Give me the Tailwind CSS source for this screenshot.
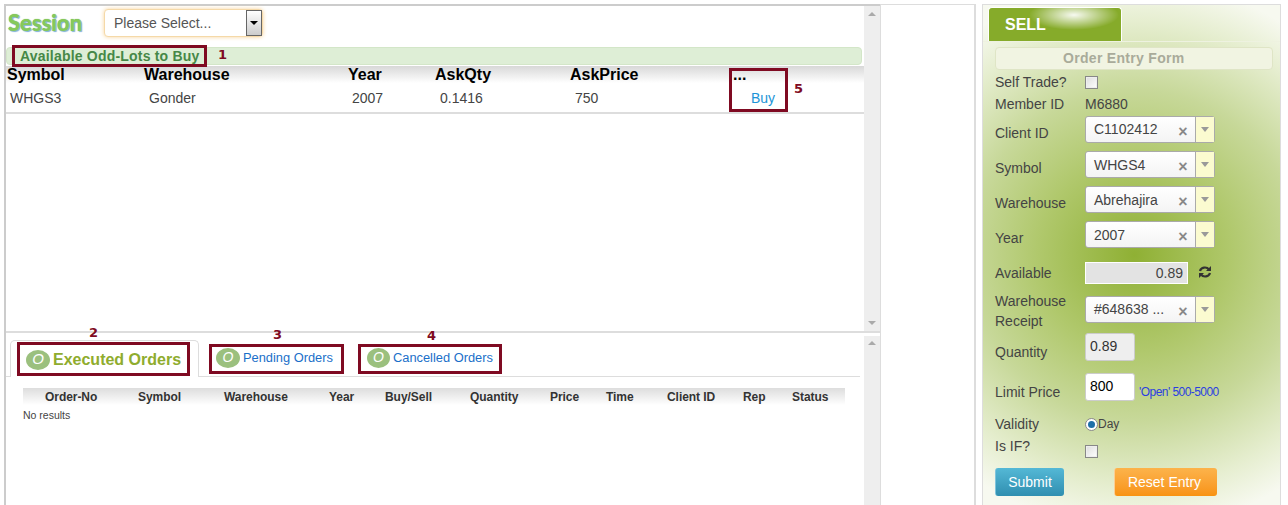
<!DOCTYPE html>
<html lang="en">
<head>
    <meta charset="UTF-8">
    <title>Odd-Lots Order Entry</title>
    <script src="https://cdn.jsdelivr.net/npm/@tailwindcss/browser@4"></script>
</head>
<body class="bg-white font-['Liberation_Sans',Arial,sans-serif] text-[14px] text-[#444]">
<div class="relative flex w-[1288px] h-[505px] overflow-hidden">

    <!-- Left: market + orders -->
    <div class="ml-[4px] w-[876px] h-[505px] flex flex-col border-l-2 border-t-2 border-[#ccc] mt-[4px] shrink-0">
        <!-- Market pane -->
        <div class="flex h-[325px] shrink-0">
            <div class="w-[858px] shrink-0">
                <div class="flex items-start h-[41px] pt-[3px]">
                    <span class="ml-[2px] w-[96px] mt-[3px] font-['Lato',sans-serif] font-black text-[22px] leading-none text-[#86c95a] [text-shadow:1px_1px_1px_#7fb0d8,0_0_1px_#6fb548]">Session</span>
                    <div class="flex w-[159px] h-[28px] rounded-[4px] border border-[#f5d9a8] shadow-[0_0_4px_#f8d49a] bg-white">
                        <span class="flex-1 pl-[9px] leading-[26px] text-[#555]">Please Select...</span>
                        <span class="flex items-center justify-center w-[16px] border border-[#666] bg-gradient-to-b from-white to-[#ccc]">
                            <span class="w-0 h-0 border-x-[4px] border-x-transparent border-t-[4px] border-t-black"></span>
                        </span>
                    </div>
                </div>
                <div class="mr-[2px] h-[18px] rounded-[4px] border border-[#d3e6c8] bg-[#deeed6] pl-[13px] font-bold text-[14px] leading-[17px] tracking-[0.2px] text-[#468847]">Available Odd-Lots to Buy</div>
                <div class="grid grid-cols-[137px_204px_87px_135px_163px_1fr] h-[17px] mt-[1px] pl-[1px] bg-gradient-to-b from-[#d8d8d8] to-white font-bold text-[16px] leading-[17px] text-black">
                    <span>Symbol</span><span>Warehouse</span><span>Year</span><span>AskQty</span><span>AskPrice</span><span>...</span>
                </div>
                <div class="grid grid-cols-[138px_204px_87px_135px_163px_1fr] h-[31px] pl-[4px] border-b-2 border-[#ddd] leading-[30px] text-[#444]">
                    <span>WHGS3</span><span class="pl-[1px]">Gonder</span><span>2007</span><span class="pl-[1px]">0.1416</span><span class="pl-[1px]">750</span><span class="pl-[14px] text-[#1c94d8]">Buy</span>
                </div>
            </div>
            <div class="flex flex-col justify-between items-center w-[16px] bg-[#eee] py-[6px]">
                <span class="w-0 h-0 border-x-[4px] border-x-transparent border-b-[4px] border-b-[#aaa]"></span>
                <span class="w-0 h-0 border-x-[4px] border-x-transparent border-t-[4px] border-t-[#aaa]"></span>
            </div>
        </div>

        <!-- Orders pane -->
        <div class="flex flex-1 border-t-2 border-[#ddd]">
            <div class="w-[858px] shrink-0 pt-[7px]">
                <div class="flex items-end h-[37px] mr-[4px] pl-[4px] border-b border-[#ddd]">
                    <div class="flex items-center w-[189px] h-[37px] -mb-px pl-[15px] pt-[1px] bg-white border border-b-0 border-[#ddd] rounded-t-[5px]">
                        <span class="flex items-center justify-center w-[24px] h-[20px] rounded-[50%] bg-[#9bc07e] italic text-white text-[15px]">O</span>
                        <span class="ml-[3px] font-bold text-[16px] text-[#8fac2e]">Executed Orders</span>
                    </div>
                    <div class="flex items-center h-[36px] ml-[17px] pb-[1px] text-[12.85px] text-[#1a6fc9]">
                        <span class="flex items-center justify-center w-[24px] h-[20px] rounded-[50%] bg-[#9bc07e] italic text-white text-[14px]">O</span>
                        <span class="ml-[3px]">Pending Orders</span>
                    </div>
                    <div class="flex items-center h-[36px] ml-[34px] pb-[1px] text-[12.85px] text-[#1a6fc9]">
                        <span class="flex items-center justify-center w-[23px] h-[20px] rounded-[50%] bg-[#9bc07e] italic text-white text-[14px]">O</span>
                        <span class="ml-[3px]">Cancelled Orders</span>
                    </div>
                </div>
                <div class="grid grid-cols-[22px_93px_86px_105px_56px_85px_80px_56px_61px_76px_49px_1fr] h-[17px] ml-[17px] mr-[19px] mt-[11px] bg-gradient-to-b from-[#ddd] to-white font-bold text-[12px] leading-[19px] tracking-[-0.05px] text-[#333]">
                    <span></span><span>Order-No</span><span>Symbol</span><span>Warehouse</span><span>Year</span><span>Buy/Sell</span><span>Quantity</span><span>Price</span><span>Time</span><span>Client ID</span><span>Rep</span><span>Status</span>
                </div>
                <p class="ml-[17px] mt-[3px] text-[10.5px] leading-[14px] text-[#444]">No results</p>
            </div>
            <div class="w-[16px] mt-[3px] bg-[#eee] pt-[5px] flex justify-center">
                <span class="w-0 h-0 border-x-[4px] border-x-transparent border-b-[4px] border-b-[#aaa]"></span>
            </div>
        </div>
    </div>

    <!-- Empty gutter -->
    <div class="w-[96px] h-[505px] mt-[4px] border-l border-r-2 border-t border-[#ddd] shrink-0"></div>

    <!-- Right: order entry form -->
    <div class="w-[299px] h-[501px] mt-[4px] ml-[6px] shrink-0 border-t border-x border-[#ddd] bg-[radial-gradient(circle_275px_at_51%_50%,#8fb034_0%,#b0c86c_35%,#c7d899_60%,#e6eed0_85%,#f7f9f0_100%)]">
        <div class="h-[37px] pl-[5px] pt-[2px] border-b border-[#eef2e0]">
            <div class="relative overflow-hidden w-[134px] h-[34px] bg-[#86ab2a] rounded-t-[4px] border-x border-t border-white pl-[16px] font-bold text-[16px] leading-[33px] text-white">
                <span class="absolute left-[40px] -top-[8px] w-[90px] h-[30px] rounded-[50%] bg-[radial-gradient(closest-side,#ffffffee,#ffffff00)]"></span>
                <span class="relative">SELL</span>
            </div>
        </div>
        <div class="ml-[12px] w-[278px] h-[23px] mt-[5px] pl-[67px] rounded-[4px] border border-[#dfe5c6] bg-[#f1f4e2] font-bold text-[14px] leading-[21px] tracking-[0.3px] text-[#a9ab9a]">Order Entry Form</div>

        <div class="pl-[12px]">
            <div class="flex items-center h-[20px] mt-[2px]">
                <span class="w-[90px]">Self Trade?</span>
                <span class="w-[13px] h-[13px] border border-[#888] bg-gradient-to-br from-[#ddd] to-white shadow-[inset_0_0_0_1px_#eee]"></span>
            </div>
            <div class="flex items-center h-[20px] mt-[2px]">
                <span class="w-[90px]">Member ID</span>
                <span>M6880</span>
            </div>

            <div class="flex h-[35px] mt-[2px]">
                <span class="w-[90px] pt-[7px]">Client ID</span>
                <div class="flex w-[130px] h-[27px] rounded-[3px] border border-[#aaa] bg-gradient-to-b from-white to-[#f4f4f4]">
                    <span class="flex-1 pl-[8px] leading-[25px]">C1102412</span>
                    <span class="w-[24px] text-center text-[#888] font-bold text-[16px] leading-[30px]">×</span>
                    <span class="flex items-center justify-center w-[19px] border-l border-[#aaa] bg-[#fbfbd0]"><span class="w-0 h-0 border-x-[4px] border-x-transparent border-t-[5px] border-t-[#999]"></span></span>
                </div>
            </div>
            <div class="flex h-[35px]">
                <span class="w-[90px] pt-[7px]">Symbol</span>
                <div class="flex w-[130px] h-[27px] rounded-[3px] border border-[#aaa] bg-gradient-to-b from-white to-[#f4f4f4]">
                    <span class="flex-1 pl-[8px] leading-[27px]">WHGS4</span>
                    <span class="w-[24px] text-center text-[#888] font-bold text-[16px] leading-[30px]">×</span>
                    <span class="flex items-center justify-center w-[19px] border-l border-[#aaa] bg-[#fbfbd0]"><span class="w-0 h-0 border-x-[4px] border-x-transparent border-t-[5px] border-t-[#999]"></span></span>
                </div>
            </div>
            <div class="flex h-[35px]">
                <span class="w-[90px] pt-[7px]">Warehouse</span>
                <div class="flex w-[130px] h-[27px] rounded-[3px] border border-[#aaa] bg-gradient-to-b from-white to-[#f4f4f4]">
                    <span class="flex-1 pl-[8px] leading-[27px]">Abrehajira</span>
                    <span class="w-[24px] text-center text-[#888] font-bold text-[16px] leading-[30px]">×</span>
                    <span class="flex items-center justify-center w-[19px] border-l border-[#aaa] bg-[#fbfbd0]"><span class="w-0 h-0 border-x-[4px] border-x-transparent border-t-[5px] border-t-[#999]"></span></span>
                </div>
            </div>
            <div class="flex h-[35px]">
                <span class="w-[90px] pt-[7px]">Year</span>
                <div class="flex w-[130px] h-[27px] rounded-[3px] border border-[#aaa] bg-gradient-to-b from-white to-[#f4f4f4]">
                    <span class="flex-1 pl-[8px] leading-[27px]">2007</span>
                    <span class="w-[24px] text-center text-[#888] font-bold text-[16px] leading-[30px]">×</span>
                    <span class="flex items-center justify-center w-[19px] border-l border-[#aaa] bg-[#fbfbd0]"><span class="w-0 h-0 border-x-[4px] border-x-transparent border-t-[5px] border-t-[#999]"></span></span>
                </div>
            </div>

            <div class="flex h-[40px] pt-[6px]">
                <span class="w-[90px] leading-[22px]">Available</span>
                <span class="w-[103px] h-[22px] border border-white bg-[#e3e3e3] pr-[4px] text-right leading-[20px]">0.89</span>
                <svg class="ml-[10px] mt-[3px]" width="14" height="14" viewBox="0 0 14 14" fill="none" stroke="#333" stroke-width="2.200"><path d="M2 6a5 4.500 0 0 1 9-1.500"/><path d="M12 8a5 4.500 0 0 1-9 1.500"/><path d="M13 1v5h-5z" fill="#333" stroke="none"/><path d="M1 13v-5h5z" fill="#333" stroke="none"/></svg>
            </div>

            <div class="flex h-[37px]">
                <span class="w-[90px] leading-[20px] -mt-[5px]">Warehouse Receipt</span>
                <div class="flex w-[130px] h-[27px] rounded-[3px] border border-[#aaa] bg-gradient-to-b from-white to-[#f4f4f4]">
                    <span class="flex-1 pl-[8px] leading-[25px]">#648638 ...</span>
                    <span class="w-[24px] text-center text-[#888] font-bold text-[16px] leading-[30px]">×</span>
                    <span class="flex items-center justify-center w-[19px] border-l border-[#aaa] bg-[#fbfbd0]"><span class="w-0 h-0 border-x-[4px] border-x-transparent border-t-[5px] border-t-[#999]"></span></span>
                </div>
            </div>

            <div class="flex h-[40px]">
                <span class="w-[90px] pt-[9px]">Quantity</span>
                <span class="w-[50px] h-[28px] rounded-[3px] border border-[#ccc] bg-[#eee] pl-[4px] leading-[25px] text-[#333]">0.89</span>
            </div>
            <div class="flex h-[41px]">
                <span class="w-[90px] pt-[9px]">Limit Price</span>
                <span class="w-[50px] h-[28px] rounded-[3px] border border-[#ccc] bg-white pl-[4px] leading-[25px] text-black">800</span>
                <span class="ml-[4px] pt-[10px] text-[12px] tracking-[-0.55px] text-[#2a3fe0]">'Open' 500-5000</span>
            </div>

            <div class="flex items-center h-[20px]">
                <span class="w-[90px]">Validity</span>
                <span class="flex items-center justify-center w-[13px] h-[13px] rounded-full border border-[#888] bg-white"><span class="w-[7px] h-[7px] rounded-full bg-[#1f6fa8]"></span></span>
                <span class="text-[12px]">Day</span>
            </div>
            <div class="flex h-[26px] mt-[2px]">
                <span class="w-[90px]">Is IF?</span>
                <span class="w-[13px] h-[13px] mt-[9px] border border-[#888] bg-gradient-to-br from-[#ddd] to-white shadow-[inset_0_0_0_1px_#eee]"></span>
            </div>

            <div class="flex mt-[6px]">
                <span class="w-[69px] h-[28px] rounded-[3px] border-l border-[#7fc4dc] bg-gradient-to-b from-[#54b8d6] to-[#2f8fb0] text-center leading-[28px] text-white">Submit</span>
                <span class="ml-[50px] w-[103px] h-[28px] pr-[3px] rounded-[3px] border-l border-[#fbcf94] bg-gradient-to-b from-[#fcb34a] to-[#f8930f] text-center leading-[28px] text-white">Reset Entry</span>
            </div>
        </div>
    </div>

    <!-- Annotation overlays -->
    <div class="absolute left-[12px] top-[45px] w-[195px] h-[22px] border-[3px] border-[#7f0a22]"></div>
    <div class="absolute left-[729px] top-[68px] w-[59px] h-[44px] border-[3px] border-[#7f0a22]"></div>
    <div class="absolute left-[17px] top-[342px] w-[173px] h-[34px] border-[3px] border-[#7f0a22]"></div>
    <div class="absolute left-[209px] top-[344px] w-[135px] h-[30px] border-[3px] border-[#7f0a22]"></div>
    <div class="absolute left-[358px] top-[344px] w-[144px] h-[30px] border-[3px] border-[#7f0a22]"></div>
    <span class="absolute left-[218px] top-[45px] font-['DejaVu_Sans',sans-serif] font-bold text-[13px] text-[#7f0a22]">1</span>
    <span class="absolute left-[89px] top-[323px] font-['DejaVu_Sans',sans-serif] font-bold text-[13px] text-[#7f0a22]">2</span>
    <span class="absolute left-[273px] top-[325px] font-['DejaVu_Sans',sans-serif] font-bold text-[13px] text-[#7f0a22]">3</span>
    <span class="absolute left-[427px] top-[326px] font-['DejaVu_Sans',sans-serif] font-bold text-[13px] text-[#7f0a22]">4</span>
    <span class="absolute left-[794px] top-[79px] font-['DejaVu_Sans',sans-serif] font-bold text-[13px] text-[#7f0a22]">5</span>
</div>
</body>
</html>
